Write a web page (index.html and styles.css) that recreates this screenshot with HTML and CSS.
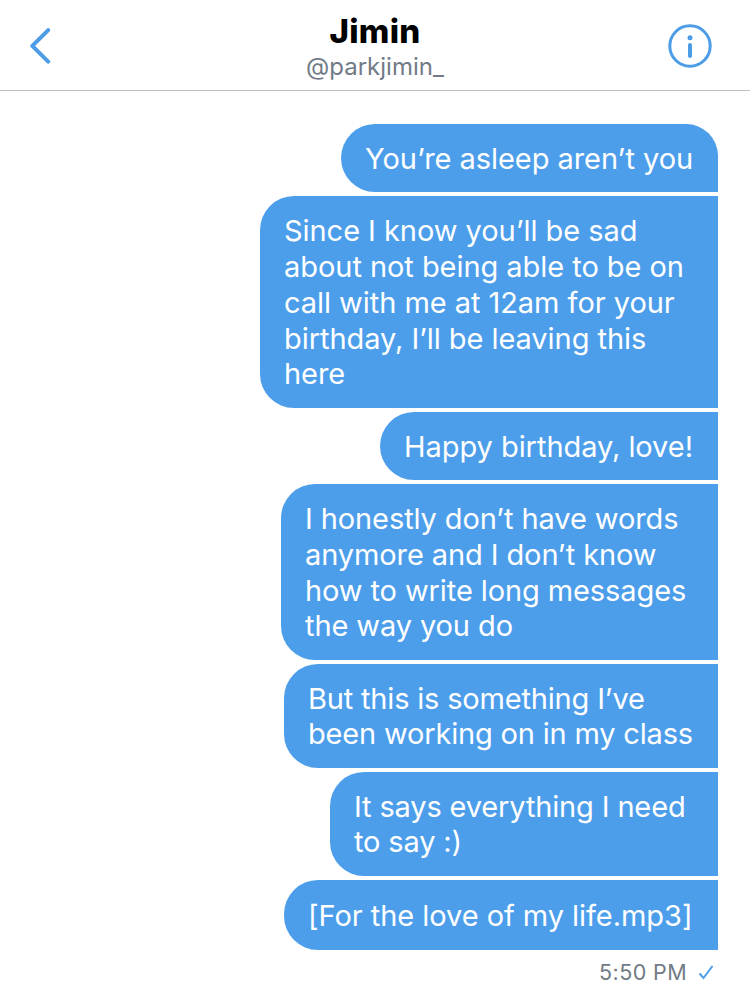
FILE: index.html
```html
<!DOCTYPE html>
<html lang="en">
<head>
    <meta charset="UTF-8">
    <title>Jimin</title>
    <link rel="stylesheet" href="styles.css">
</head>
<body>
    <header class="topbar">
        <svg class="back" width="22" height="36" viewBox="0 0 22 36">
            <path d="M18.2 2.1 L2.3 17.9 L18.2 33.7"/>
        </svg>
        <div class="contact">
            <h1 class="name">Jimin</h1>
            <div class="handle">@parkjimin_</div>
        </div>
        <svg class="info" width="44" height="44" viewBox="0 0 44 44">
            <circle cx="22" cy="22" r="20.2"/>
            <path d="M22 21 V32"/>
            <circle class="dot" cx="22" cy="13.8" r="2.5"/>
        </svg>
    </header>

    <main class="messages">
        <div class="bubble m1">You’re asleep aren’t you</div>
        <div class="bubble m2">Since I know you’ll be sad<br>about not being able to be on<br>call with me at 12am for your<br>birthday, I’ll be leaving this<br>here</div>
        <div class="bubble m3">Happy birthday, love!</div>
        <div class="bubble m4">I honestly don’t have words<br>anymore and I don’t know<br>how to write long messages<br>the way you do</div>
        <div class="bubble m5">But this is something I’ve<br>been working on in my class</div>
        <div class="bubble m6">It says everything I need<br>to say :)</div>
        <div class="bubble m7">[For the love of my life.mp3]</div>
        <div class="status">
            <span class="time">5:50 PM</span>
            <svg class="check" width="16" height="16" viewBox="0 0 16 16">
                <path d="M1.5 9.5 L5.5 14 L14.5 2"/>
            </svg>
        </div>
    </main>
</body>
</html>
```

FILE: styles.css
```css
body {
    margin: 0;
    background: #fff;
    font-family: Inter, "Liberation Sans", sans-serif;
}

.topbar {
    display: grid;
    grid-template-columns: 1fr auto 1fr;
    box-sizing: border-box;
    height: 91px;
    padding: 0 38px 0 30px;
    border-bottom: 1px solid #bdbfc1;
}

.back {
    margin-top: 28px;
}

.back path,
.info path,
.info circle {
    fill: none;
    stroke: #4c9ce6;
    stroke-width: 4;
    stroke-linecap: round;
    stroke-linejoin: round;
}

.info {
    justify-self: end;
    margin-top: 24px;
}

.info circle {
    stroke-width: 3;
}

.info .dot {
    fill: #4c9ce6;
    stroke: none;
}

.contact {
    margin-left: 8px;
    text-align: center;
}

.name {
    margin: 11px 0 0;
    font-size: 33px;
    font-weight: 800;
    line-height: 40px;
    letter-spacing: 0.3px;
}

.handle {
    margin-top: 2px;
    color: #717b86;
    font-size: 24px;
    line-height: 28px;
}

.messages {
    display: flex;
    flex-direction: column;
    align-items: flex-end;
    gap: 4px;
    padding: 33px 32px 0 0;
}

.bubble {
    box-sizing: border-box;
    height: 68px;
    padding: 17px 24px 0;
    border-radius: 34px 0 0 34px;
    background: #4c9eeb;
    color: #fff;
    font-size: 29px;
    line-height: 36px;
    letter-spacing: -0.05px;
    white-space: nowrap;
}

.m1 {
    width: 377px;
    border-top-right-radius: 32px;
}

.m2 {
    width: 458px;
    height: 212px;
    padding-top: 17.2px;
    line-height: 35.8px;
}

.m3 {
    width: 338px;
}

.m4 {
    width: 437px;
    height: 176px;
    line-height: 35.8px;
    letter-spacing: -0.1px;
}

.m5 {
    width: 434px;
    height: 104px;
    line-height: 35px;
    letter-spacing: -0.18px;
}

.m6 {
    width: 388px;
    height: 104px;
    line-height: 35px;
    letter-spacing: -0.15px;
}

.m7 {
    width: 434px;
    height: 70px;
    padding-top: 18px;
}

.status {
    display: flex;
    align-items: center;
    gap: 11px;
    margin: 4px 4px 0 0;
    color: #717b86;
    font-size: 21.5px;
    line-height: 28px;
}

.time {
    letter-spacing: 0.4px;
}

.check path {
    fill: none;
    stroke: #4c9ce6;
    stroke-width: 2;
}
```
